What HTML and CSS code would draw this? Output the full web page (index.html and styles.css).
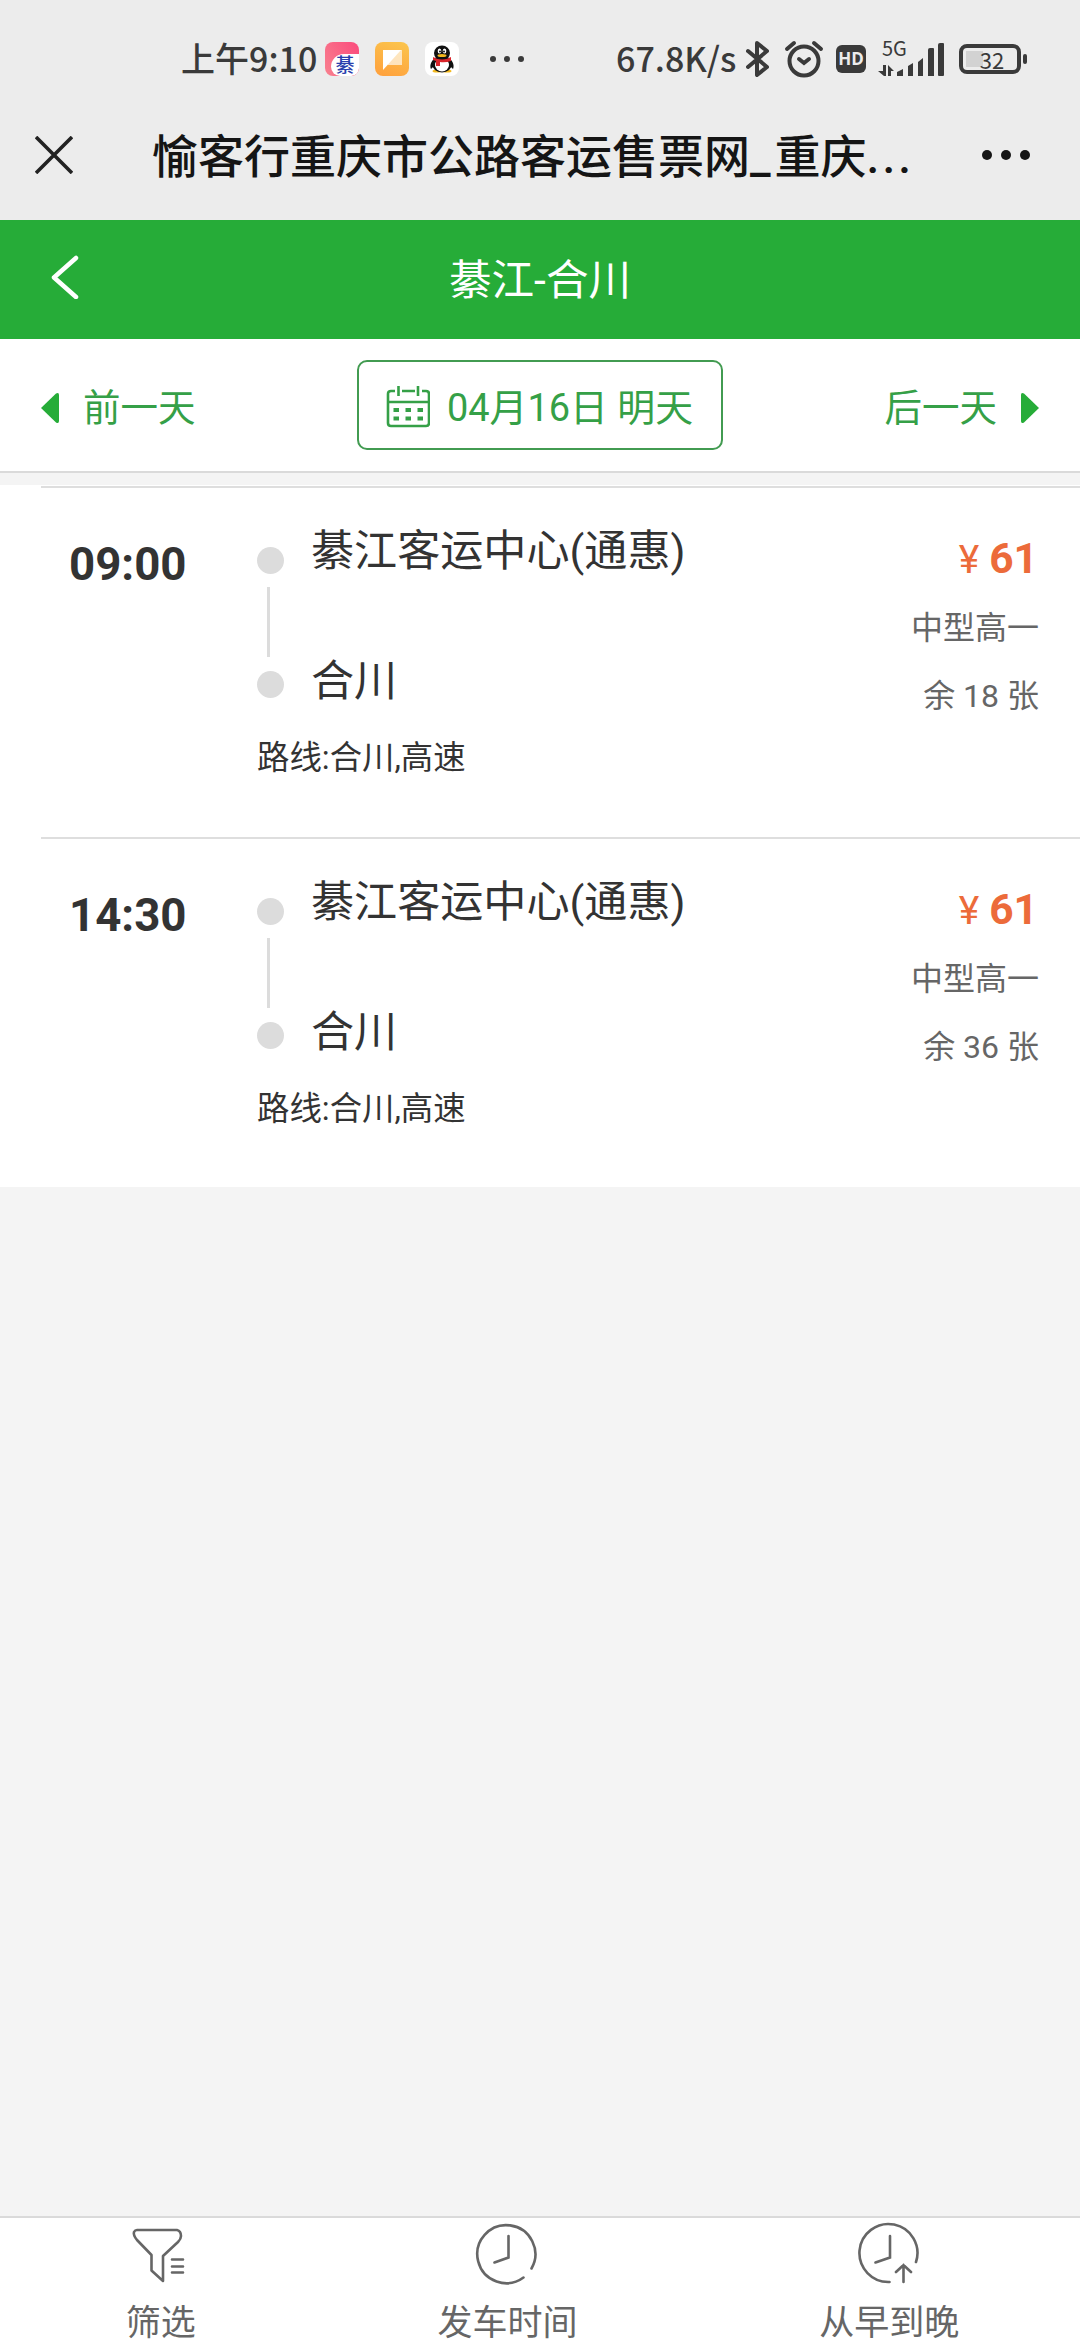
FILE: index.html
```html
<!DOCTYPE html>
<html lang="zh-CN">
<head>
<meta charset="utf-8">
<meta name="viewport" content="width=device-width">
<title>愉客行重庆市公路客运售票网</title>
<link rel="stylesheet" href="styles.css">
</head>
<body>
<div class="status">
	<span class="clock">上午9:10</span>
	<span class="app app-pink"><span class="badge">綦</span></span>
	<span class="app app-note">
		<svg width="34" height="34"><path d="M8 8V28L26 8z" fill="#fff"/><path d="M8 8H27V23H13z" fill="#fff" opacity=".65"/></svg>
	</span>
	<span class="app app-qq">
		<svg width="34" height="34">
			<path d="M8 18C5 21 5 25 6 27L9 24zM26 18C29 21 29 25 28 27L25 24z" fill="#111"/>
			<ellipse cx="12" cy="29" rx="4.500" ry="1.600" fill="#f3b91f"/>
			<ellipse cx="22" cy="29" rx="4.500" ry="1.600" fill="#f3b91f"/>
			<ellipse cx="17" cy="22" rx="10" ry="8.500" fill="#111"/>
			<ellipse cx="17" cy="23" rx="7" ry="6.500" fill="#fff"/>
			<ellipse cx="17" cy="11" rx="8" ry="7.500" fill="#111"/>
			<ellipse cx="14.500" cy="9" rx="1.800" ry="2.500" fill="#fff"/>
			<ellipse cx="19.500" cy="9" rx="1.800" ry="2.500" fill="#fff"/>
			<circle cx="15" cy="9.500" r="1" fill="#111"/>
			<circle cx="19" cy="9.500" r="1" fill="#111"/>
			<ellipse cx="17" cy="13.500" rx="4.500" ry="1.500" fill="#f3b91f"/>
			<path d="M8 15Q17 20 26 15V19Q20 21 15 20V24H11V19L8 18z" fill="#d9252b"/>
		</svg>
	</span>
	<svg class="more" width="36" height="8" fill="#3a3a3a"><circle cx="4" cy="4" r="3"/><circle cx="18" cy="4" r="3"/><circle cx="32" cy="4" r="3"/></svg>
	<span class="speed">67.8K/s</span>
	<svg class="bluetooth" width="24" height="40" fill="none" stroke="#3a3a3a" stroke-width="4" stroke-linejoin="round" stroke-linecap="round"><path d="M2 12L21 28L11 36V4L21 12L2 28"/></svg>
	<svg class="alarm" width="40" height="38" fill="none" stroke="#3a3a3a" stroke-width="4" stroke-linecap="round"><circle cx="20" cy="21" r="14.500"/><path d="M15 19L20 23L25 19M3 9L10 3M37 9L30 3" /></svg>
	<span class="hd">HD</span>
	<div class="signal">
		<span class="net">5G</span>
		<svg width="68" height="22" fill="#3a3a3a"><path d="M5 10H8V21H6L0 16H5zM10 10L16 16H13V21H10z"/><path d="M19 21V17L25 14V21zM30 21V11L35 8V21zM40 21V7L45 3V21zM50 21V0H56V21z"/></svg>
		<span class="bar"></span>
		<span class="bar bar-last"></span>
	</div>
	<div class="battery"><span>32</span></div>
</div>

<div class="webbar">
	<svg class="close" width="38" height="38" stroke="#222" stroke-width="3.600"><path d="M1 1L37 37M37 1L1 37"/></svg>
	<div class="webtitle">愉客行重庆市公路客运售票网<span class="underline">_</span>重庆<span class="dots">...</span></div>
	<svg class="menu" width="50" height="10" fill="#151515"><circle cx="6" cy="5" r="5"/><circle cx="25" cy="5" r="5"/><circle cx="44" cy="5" r="5"/></svg>
</div>

<div class="header">
	<svg class="back" width="28" height="44" fill="none" stroke="#fff" stroke-width="4.500" stroke-linecap="round" stroke-linejoin="round"><path d="M25 3L3 22.500L25 42"/></svg>
	<h1>綦江-合川</h1>
</div>

<div class="datebar">
	<div class="day">
		<svg width="18" height="32" fill="#26ac38"><path d="M0 16L15 1.500Q18 0 18 3V29Q18 32 15 30.500z"/></svg>
		<span>前一天</span>
	</div>
	<div class="date">
		<svg width="44" height="44" fill="none" stroke="#35a047" stroke-width="2.600"><path d="M9 6H5Q2 6 2 9V38Q2 41 5 41H40Q43 41 43 38V9Q43 6 40 6H36M16 6H29M2 17H43M12.500 1V11M32 1V11"/><path d="M7.500 25H13M19.500 25H25M31.500 25H37M7.500 33.500H13M19.500 33.500H25M31.500 33.500H37" stroke-width="4.200"/></svg>
		<span>04月16日 明天</span>
	</div>
	<div class="day">
		<span>后一天</span>
		<svg width="18" height="32" fill="#26ac38"><path d="M18 16L3 1.500Q0 0 0 3V29Q0 32 3 30.500z"/></svg>
	</div>
</div>

<ul class="list">
	<li>
		<div class="time">09:00</div>
		<div class="info">
			<div class="route">
				<div class="line"><i></i><b></b><i></i></div>
				<div class="station"><p>綦江客运中心(通惠)</p><p>合川</p></div>
			</div>
			<p class="via">路线:合川,高速</p>
		</div>
		<div class="ticket">
			<p class="price"><span>¥</span>61</p>
			<p>中型高一</p>
			<p>余 18 张</p>
		</div>
	</li>
	<li>
		<div class="time">14:30</div>
		<div class="info">
			<div class="route">
				<div class="line"><i></i><b></b><i></i></div>
				<div class="station"><p>綦江客运中心(通惠)</p><p>合川</p></div>
			</div>
			<p class="via">路线:合川,高速</p>
		</div>
		<div class="ticket">
			<p class="price"><span>¥</span>61</p>
			<p>中型高一</p>
			<p>余 36 张</p>
		</div>
	</li>
</ul>

<div class="tabs">
	<div class="tab">
		<svg width="64" height="64" fill="none" stroke="#666" stroke-width="2.600" stroke-linecap="round" stroke-linejoin="round"><path d="M8 9H48Q52 10 52 15Q52 18 49 21L34 35V60L22.500 49.500V34L8 19Q4 14 5 11Q6 9 8 9zM43 38.500H54M43 45.500H54M43 51.500H54"/></svg>
		<span>筛选</span>
	</div>
	<div class="tab">
		<svg width="64" height="64" fill="none" stroke="#666" stroke-width="2.600" stroke-linecap="round"><path d="M56.500 47.500A29 29 0 1 0 48.500 56.500M33.500 15V36.500L19.500 41.500"/></svg>
		<span>发车时间</span>
	</div>
	<div class="tab">
		<svg width="64" height="64" fill="none" stroke="#666" stroke-width="2.600" stroke-linecap="round"><path d="M59 41A29 29 0 1 0 32.500 61M33 15V36.500L18.500 41.500M46.500 61V44M39 51L46.500 44L54 51"/></svg>
		<span>从早到晚</span>
	</div>
</div>
</body>
</html>
```
FILE: styles.css
```css
*{margin: 0;padding: 0;list-style: none;box-sizing: border-box;}
html,body{height: 100%;}
body{width: 1080px;height: 2340px;overflow: hidden;background: #f4f4f4;color: #333;display: flex;flex-direction: column;
	font-family: Roboto,"Noto Sans CJK SC",sans-serif;}
svg{display: block;flex: none;}

/* 手机状态栏 */
.status{height: 118px;flex: none;background: #ececec;display: flex;align-items: center;padding-left: 181px;
	font-family: "Noto Sans CJK SC",sans-serif;color: #3a3a3a;white-space: nowrap;}
.clock,.speed{font-size: 34px;font-weight: 500;line-height: 40px;padding-bottom: 2px;}
.clock{width: 144px;}
.app{width: 34px;height: 34px;border-radius: 8px;margin-right: 16px;overflow: hidden;flex: none;}
.app-pink{background: linear-gradient(60deg,#f8818f,#fb4a7c);display: flex;justify-content: flex-end;align-items: flex-end;}
.badge{width: 28px;height: 22px;border-radius: 14px 0 8px 10px;background: #fff;color: #2a3fae;font-size: 19px;line-height: 20px;text-align: center;font-weight: 500;}
.app-note{background: linear-gradient(200deg,#fbc64d,#ff9f3c);}
.app-qq{background: #fff;}
.more{margin-left: 14px;}
.speed{margin-left: 91px;width: 130px;}
.bluetooth{margin-right: 14px;}
.alarm{margin-right: 12px;}
.hd{width: 30px;height: 28px;border-radius: 6px;background: #3a3a3a;color: #ececec;font: 700 17px/28px "Open Sans",sans-serif;text-align: center;}
.signal{width: 68px;height: 34px;margin: -2px 0 0 12px;padding-top: 14px;position: relative;}
.net{position: absolute;left: 4px;top: -3px;font-size: 20px;line-height: 20px;}
.bar{position: absolute;left: 50px;top: 7px;width: 6px;height: 28px;background: #3a3a3a;border-radius: 2px 1px 1px 1px;}
.bar-last{left: 60px;top: 2px;height: 33px;}
.battery{width: 62px;height: 30px;margin-left: 13px;border: 4px solid #3a3a3a;border-radius: 8px;position: relative;
	background: linear-gradient(#d2d2d2,#d2d2d2) 3px 3px no-repeat;background-size: 17px 16px;
	font-size: 22px;line-height: 22px;text-align: center;padding-left: 4px;}
.battery:after{content: "";position: absolute;right: -10px;top: 6px;width: 4px;height: 10px;border-radius: 2px;background: #3a3a3a;}

/* 网页标题 */
.webbar{height: 102px;flex: none;background: #ececec;display: flex;padding-left: 35px;}
.close{margin-top: 18px;}
.webtitle{width: 829px;padding-left: 79px;font-size: 46px;font-weight: 500;line-height: 79px;color: #151515;white-space: nowrap;}
.underline{letter-spacing: 4px;}
.dots{letter-spacing: 3px;}
.menu{margin: 32px 0 0 79px;}

.header{height: 119px;flex: none;background: #26ac38;color: #fff;display: flex;align-items: center;justify-content: center;position: relative;}
.header h1{font-size: 42.600px;font-weight: 400;line-height: 116px;}
.back{position: absolute;left: 51px;top: 35px;}

.datebar{height: 134px;flex: none;background: #fff;border-bottom: 2px solid #dadada;padding: 0 41px;display: flex;
	justify-content: space-between;align-items: center;color: #35a047;font-size: 37.500px;}
.day{display: flex;align-items: center;gap: 24px;}
.day span{padding-bottom: 2px;}
.day svg{margin-top: 6px;}
.date{width: 366px;height: 90px;border: 2px solid #429b51;border-radius: 10px;padding-left: 27px;display: flex;align-items: center;gap: 17px;font-size: 37.900px;white-space: nowrap;}
.date span{padding-bottom: 2px;}
.date svg{margin-top: 3px;}

/* 班次 */
.list{margin-top: 12px;flex: none;background: #fff;}
.list li{height: 351px;display: flex;padding-left: 69px;padding-right: 41px;
	background: linear-gradient(#dedede,#dedede) 41px 1px no-repeat;background-size: 100% 2px;}
.time{width: 188px;padding-top: 53px;font-size: 45.600px;font-weight: 700;line-height: 53px;}
.info{flex: 1;}
.route{display: flex;padding-top: 62px;height: 240px;}
.line{width: 54px;}
.line i{display: block;width: 27px;height: 27px;border-radius: 50%;background: #dcdcdc;}
.line b{display: block;width: 3px;height: 70px;margin: 13px 0 14px 10px;background: #dcdcdc;}
.station{margin-top: -40px;font-size: 43.100px;}
.station p{line-height: 130px;margin-top: -20px;}
.station p + p{margin-top: 0;}
.via{font-size: 32.400px;line-height: 40px;margin-top: 13px;}
.ticket{text-align: right;font-size: 32px;color: #666;padding-top: 40px;}
.ticket p{line-height: 68px;}
.ticket .price{color: #ec6b3a;font-size: 42.500px;font-weight: 700;padding-right: 1px;}
.price span{font-size: 39px;font-weight: 400;margin-right: 10px;}

.tabs{margin-top: auto;height: 124px;flex: none;border-top: 2px solid #dadada;background: #fff;display: flex;justify-content: space-around;padding-left: 5px;}
.tab{display: flex;flex-direction: column;align-items: center;color: #666;font-size: 35px;padding-top: 3px;}
.tab span{line-height: 32px;margin-top: 23px;white-space: nowrap;}
```
